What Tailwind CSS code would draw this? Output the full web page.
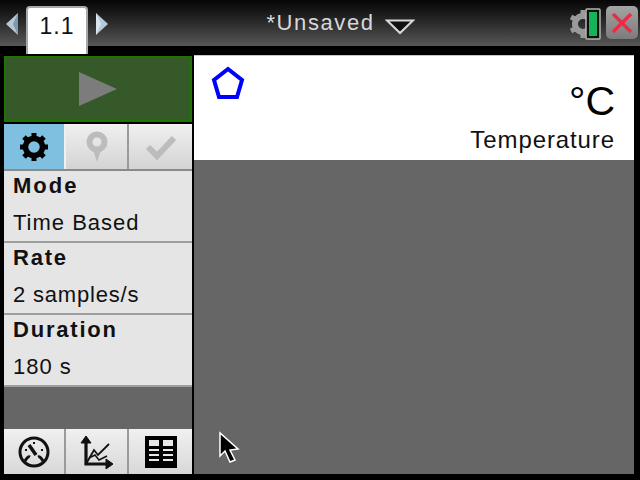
<!DOCTYPE html>
<html lang="en">
<head>
    <meta charset="UTF-8">
    <title>Data Collection</title>
    <script src="https://cdn.jsdelivr.net/npm/@tailwindcss/browser@4"></script>
</head>
<body class="bg-black w-[640px] h-[480px] overflow-hidden font-['Liberation_Sans',sans-serif]">

    <!-- Title bar -->
    <div class="relative h-[46px] bg-gradient-to-b from-[#060606] to-[#585858]">
        <svg class="absolute left-[5px] top-[12px]" width="14" height="24" viewBox="0 0 14 24">
            <path d="M13 1 L1 12 L13 23 Z" fill="#b5c9d8"/>
            <path d="M13 1 L13 23 L8 12 Z" fill="#7f98ab"/>
        </svg>
        <svg class="absolute left-[95px] top-[12px]" width="14" height="24" viewBox="0 0 14 24">
            <path d="M1 1 L13 12 L1 23 Z" fill="#b5c9d8"/>
            <path d="M1 1 L1 23 L6 12 Z" fill="#dbe6ee"/>
        </svg>
        <div class="absolute left-[26px] top-[6px] w-[62px] h-[48px] bg-white border-2 border-b-0 border-[#a8a8a8] rounded-t-[4px] text-center text-[23px] leading-[36px] tracking-[1px] text-[#111]">1.1</div>
        <div class="flex items-center justify-center gap-[10px] pl-[41px] h-[46px]">
            <span class="text-[22px] leading-[48px] tracking-[1.6px] text-[#d8d8d8]">*Unsaved</span>
            <svg class="mt-[8px]" width="30" height="16" viewBox="0 0 30 16"><path d="M2 1.5 H28 L15 14 Z" fill="#111" stroke="#d8d8d8" stroke-width="2.2"/></svg>
        </div>
        <!-- gear + battery -->
        <svg class="absolute left-[568px] top-[6px]" width="34" height="34" viewBox="0 0 34 34">
            <circle cx="15" cy="18" r="8" fill="none" stroke="#9a9a9a" stroke-width="6"/>
            <path d="M15 4 V9 M15 27 V32 M3 11 L7 13 M3 25 L7 23" stroke="#9a9a9a" stroke-width="5"/>
            <rect x="18" y="3" width="14" height="30" rx="1" fill="#111" stroke="#b5b5b5" stroke-width="1.5"/>
            <rect x="21" y="6" width="8" height="24" fill="#14b45a"/>
        </svg>
        <div class="absolute left-[606px] top-[6px] w-[32px] h-[33px] rounded-[5px] bg-gradient-to-b from-[#a4a4a4] to-[#7c7c7c] flex items-center justify-center">
            <svg width="24" height="24" viewBox="0 0 24 24"><path d="M3 3 L21 21 M21 3 L3 21" stroke="#ee2b45" stroke-width="3.4"/></svg>
        </div>
    </div>

    <div class="flex h-[428px] mt-[8px] pl-[4px] pr-[6px] gap-[2px]">
        <!-- Left panel -->
        <div class="w-[188px] h-[420px] flex flex-col border-t-2 border-black">
            <div class="h-[66px] shrink-0 mb-[2px] bg-[#36592a] border-2 border-[#1d7400] flex items-center justify-center">
                <svg width="40" height="36" viewBox="0 0 40 36"><path d="M1 1 L39 18 L1 35 Z" fill="#7c7c7c"/></svg>
            </div>
            <div class="h-[47px] shrink-0 grid grid-cols-[62px_1fr_1fr] border-b-2 border-[#8a8a8a]">
                <div class="bg-[#7fc0e0] border-r-2 border-[#f0f0f0] flex items-center justify-center">
                    <svg width="30" height="30" viewBox="0 0 30 30">
                        <circle cx="15" cy="15" r="8.5" fill="none" stroke="#000" stroke-width="5.5"/>
                        <path d="M15 1 V6 M15 24 V29 M1 15 H6 M24 15 H29 M5 5 L9 9 M21 21 L25 25 M25 5 L21 9 M9 21 L5 25" stroke="#000" stroke-width="5"/>
                    </svg>
                </div>
                <div class="bg-gradient-to-b from-[#f0f0f0] to-[#d4d4d4] border-r-2 border-[#9a9a9a] flex items-center justify-center">
                    <svg width="24" height="32" viewBox="0 0 24 32"><circle cx="12" cy="11" r="7.5" fill="none" stroke="#bcbcbc" stroke-width="6"/><path d="M8 19 H16 L12 31 Z" fill="#bcbcbc"/></svg>
                </div>
                <div class="bg-gradient-to-b from-[#f0f0f0] to-[#d4d4d4] flex items-center justify-center">
                    <svg width="32" height="26" viewBox="0 0 32 26"><path d="M3 13 L12 22 L29 4" fill="none" stroke="#bcbcbc" stroke-width="6"/></svg>
                </div>
            </div>
            <div class="h-[72px] shrink-0 bg-[#e5e5e5] border-b-2 border-[#9e9e9e] pl-[9px] text-[#111] text-[22px] tracking-[1px]">
                <div class="font-bold leading-[30px] tracking-[2px]">Mode</div>
                <div class="leading-[44px]">Time Based</div>
            </div>
            <div class="h-[72px] shrink-0 bg-[#e5e5e5] border-b-2 border-[#9e9e9e] pl-[9px] text-[#111] text-[22px] tracking-[1px]">
                <div class="font-bold leading-[30px] tracking-[1.8px]">Rate</div>
                <div class="leading-[44px] tracking-[0.8px]">2 samples/s</div>
            </div>
            <div class="h-[72px] shrink-0 bg-[#e5e5e5] border-b-2 border-[#9e9e9e] pl-[9px] text-[#111] text-[22px] tracking-[1px]">
                <div class="font-bold leading-[30px] tracking-[1.8px]">Duration</div>
                <div class="leading-[44px]">180 s</div>
            </div>
            <div class="flex-1 bg-[#666666]"></div>
            <div class="h-[45px] shrink-0 grid grid-cols-[62px_1fr_1fr] bg-gradient-to-b from-[#f0f0f0] to-[#d8d8d8]">
                <div class="border-r-2 border-[#9a9a9a] flex items-center justify-center">
                    <svg width="32" height="32" viewBox="0 0 32 32" fill="none" stroke="#111">
                        <circle cx="16" cy="16" r="14" stroke-width="3"/>
                        <path d="M7 25 Q10 20 12 21 M25 25 Q22 20 20 21" stroke-width="3"/>
                        <path d="M11 9 L18 19" stroke-width="3.5"/>
                        <path d="M7 14 H9 M16 6 V8 M25 14 H23" stroke-width="2"/>
                    </svg>
                </div>
                <div class="border-r-2 border-[#9a9a9a] flex items-center justify-center">
                    <svg width="34" height="34" viewBox="0 0 34 34" fill="none" stroke="#111">
                        <path d="M6 4 V29 H31" stroke-width="3.2"/>
                        <path d="M1 8 L6 1 L11 8 Z M26 24 L33 29 L26 34 Z" fill="#111" stroke-width="1"/>
                        <path d="M6 29 L14 15 L18 20 L29 9" stroke-width="1.8"/>
                        <path d="M9 23 L15 20 L19 25 L27 21" stroke-width="1.5"/>
                    </svg>
                </div>
                <div class="flex items-center justify-center">
                    <svg width="32" height="32" viewBox="0 0 32 32">
                        <rect width="32" height="32" fill="#000"/>
                        <path d="M4 4 H14 V10 H4 Z M18 4 H28 V10 H18 Z" fill="#e8e8e8"/>
                        <path d="M4 14 H14 M18 14 H28 M4 19 H14 M18 19 H28 M4 24 H14 M18 24 H28" stroke="#e8e8e8" stroke-width="2"/>
                    </svg>
                </div>
            </div>
        </div>

        <!-- Main panel -->
        <div class="relative flex-1 h-[420px] flex flex-col pt-[1px]">
            <div class="relative h-[105px] bg-white border-t border-[#c8c8c8]">
                <svg class="absolute left-[17px] top-[10px]" width="34" height="34" viewBox="0 0 34 34"><path d="M17 3 L31 14 L26 31 H8 L3 14 Z" fill="none" stroke="#0000ff" stroke-width="4"/></svg>
                <div class="absolute right-[19px] top-[20px] text-[41px] leading-[50px] text-black">°C</div>
                <div class="absolute right-[19px] top-[69px] text-[24px] leading-[30px] tracking-[0.9px] text-[#111]">Temperature</div>
            </div>
            <div class="flex-1 bg-[#666666]"></div>
            <svg class="absolute left-[24px] top-[377px]" width="24" height="34" viewBox="0 0 24 34"><path d="M2 2 V25 L7 20 L12 31 L17 29 L12 19 L20 18 Z" fill="#000" stroke="#fff" stroke-width="1.5"/></svg>
        </div>
    </div>

</body>
</html>
